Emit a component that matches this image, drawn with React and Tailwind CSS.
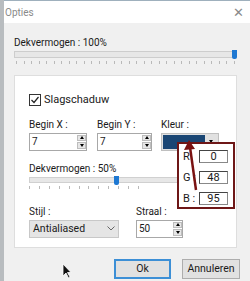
import React from "react";

function Spinner() {
  return (
    <div className="flex flex-col gap-[1px] w-[9px] h-full py-[1px]">
      <div className="flex-1 bg-[#e6e6e6] border border-[#bdbdbd] flex items-center justify-center">
        <div className="w-0 h-0 border-l-[2px] border-r-[2px] border-b-[3px] border-l-transparent border-r-transparent border-b-black" />
      </div>
      <div className="flex-1 bg-[#e6e6e6] border border-[#bdbdbd] flex items-center justify-center">
        <div className="w-0 h-0 border-l-[2px] border-r-[2px] border-t-[3px] border-l-transparent border-r-transparent border-t-black" />
      </div>
    </div>
  );
}

function Ticks({ count, className }) {
  return (
    <div className={`flex justify-between ${className}`}>
      {Array.from({ length: count }).map((_, i) => (
        <div key={i} className="w-px h-[3px] bg-[#b9b9b9]" />
      ))}
    </div>
  );
}

function NumberBox({ value, width }) {
  return (
    <div className={`flex items-stretch h-[18px] bg-white border border-[#a8a8a8] ${width}`}>
      <span className="flex-1 pl-[2px] leading-[16px]">{value}</span>
      <Spinner />
    </div>
  );
}

function RgbRow({ label, value }) {
  return (
    <div className="flex items-center h-[13px]">
      <span className="w-[16px] leading-[13px]">{label}</span>
      <div className="w-[29px] h-[13px] border border-[#888] border-t-[#444] border-l-[#444] text-center leading-[11px]">{value}</div>
    </div>
  );
}

export default function App() {
  return (
    <div
      className="relative w-[250px] h-[281px] overflow-hidden bg-[#f0f0f0] text-[10px] text-[#1a1a1a]"
      style={{ fontFamily: 'Roboto, "Noto Sans", sans-serif' }}
    >
      <div className="flex h-full">
        <div className="w-[4px] bg-[#b8bcbf]" />
        <div className="flex-1 flex flex-col border-t border-[#9fb0bd]">
          <div className="h-[22px] bg-white flex items-center justify-between pl-[1px] pr-[6px]">
            <span className="text-[#8a8a8a] text-[10px]">Opties</span>
            <span className="text-[#8a8a8a] text-[13px] font-light leading-none">✕</span>
          </div>
          <div className="flex-1 flex flex-col pl-[10px] pr-[13px] pt-[13px]">
            <span className="leading-[13px]">Dekvermogen : 100%</span>
            <div className="relative mt-[2px] h-[7px] bg-[#e7e7e7] border border-[#cdcdcd]">
              <div className="absolute right-[-1px] top-[-2px] w-[5px] h-[9px] bg-[#1e78d2] rounded-b-[2px]" />
            </div>
            <Ticks count={30} className="mt-[3px] px-[2px]" />
            <div className="mt-[11px] h-[173px] bg-white border border-[#dedede] pl-[14px] pt-[16px]">
              <div className="flex items-center gap-[3px]">
                <div className="w-[12px] h-[12px] border border-[#333] flex items-center justify-center">
                  <svg width="10" height="10" viewBox="0 0 10 10">
                    <path d="M1.5 5 L4 7.5 L8.5 2" fill="none" stroke="#222" strokeWidth="1.2" />
                  </svg>
                </div>
                <span className="text-[11px]">Slagschaduw</span>
              </div>
              <div className="flex mt-[8px]">
                <div className="flex flex-col gap-[1px]">
                  <span>Begin X :</span>
                  <NumberBox value="7" width="w-[58px]" />
                </div>
                <div className="flex flex-col gap-[1px] ml-[10px]">
                  <span>Begin Y :</span>
                  <NumberBox value="7" width="w-[55px]" />
                </div>
                <div className="flex flex-col gap-[1px] ml-[9px]">
                  <span>Kleur :</span>
                  <div className="flex h-[18px] border border-[#bfbfbf] bg-[#e1e1e1] p-[1px] w-[58px]">
                    <div className="flex-1 bg-[#1a4674]" />
                    <div className="w-[12px] flex items-center justify-center">
                      <div className="w-0 h-0 border-l-[2px] border-r-[2px] border-t-[3px] border-l-transparent border-r-transparent border-t-black" />
                    </div>
                  </div>
                </div>
              </div>
              <div className="mt-[10px] w-[150px]">
                <span>Dekvermogen : 50%</span>
                <div className="relative mt-[1px] h-[6px] bg-[#e7e7e7] border border-[#d0d0d0]">
                  <div className="absolute left-[84px] top-[-2px] w-[5px] h-[9px] bg-[#1e78d2] rounded-b-[2px]" />
                </div>
                <Ticks count={12} className="mt-[3px] pr-[40px]" />
              </div>
              <div className="flex gap-[17px] mt-[15px]">
                <div className="flex flex-col gap-[1px]">
                  <span>Stijl :</span>
                  <div className="w-[90px] h-[18px] bg-[#e5e5e5] border border-[#c8c8c8] flex items-center justify-between px-[3px]">
                    <span className="text-[10.5px]">Antialiased</span>
                    <svg width="8" height="5" viewBox="0 0 8 5">
                      <path d="M0.5 0.5 L4 4 L7.5 0.5" fill="none" stroke="#666" strokeWidth="1" />
                    </svg>
                  </div>
                </div>
                <div className="flex flex-col gap-[1px]">
                  <span>Straal :</span>
                  <NumberBox value="50" width="w-[47px]" />
                </div>
              </div>
            </div>
            <div className="flex justify-end gap-[11px] mt-[11px] mr-[-3px]">
              <button className="w-[57px] h-[20px] bg-[#e1e1e1] border-2 border-[#3c8fd6] text-[10.5px]">Ok</button>
              <button className="w-[58px] h-[20px] bg-[#e1e1e1] border border-[#adadad] text-[10.5px]">Annuleren</button>
            </div>
          </div>
        </div>
      </div>

      <div className="absolute left-[177px] top-[142px] w-[58px] h-[67px] border-2 border-[#6e1717] bg-white flex flex-col gap-[8px] pl-[4px] pt-[6px] text-[11px]">
        <RgbRow label="R" value="0" />
        <RgbRow label="G :" value="48" />
        <RgbRow label="B :" value="95" />
      </div>

      <svg className="absolute left-[183px] top-[138px]" width="16" height="54" viewBox="0 0 16 54">
        <path d="M13 52 L7 9" stroke="#7a1212" strokeWidth="2.5" fill="none" />
        <path d="M6 2 L1 12 L12 11 Z" fill="#7a1212" />
      </svg>

      <svg className="absolute left-[62px] top-[263px]" width="10" height="16" viewBox="0 0 10 16">
        <path d="M1 1 L1 13 L4 10 L6.5 15 L8 14 L5.5 9.5 L9 9.5 Z" fill="#111" stroke="#fff" strokeWidth="0.8" />
      </svg>
    </div>
  );
}
